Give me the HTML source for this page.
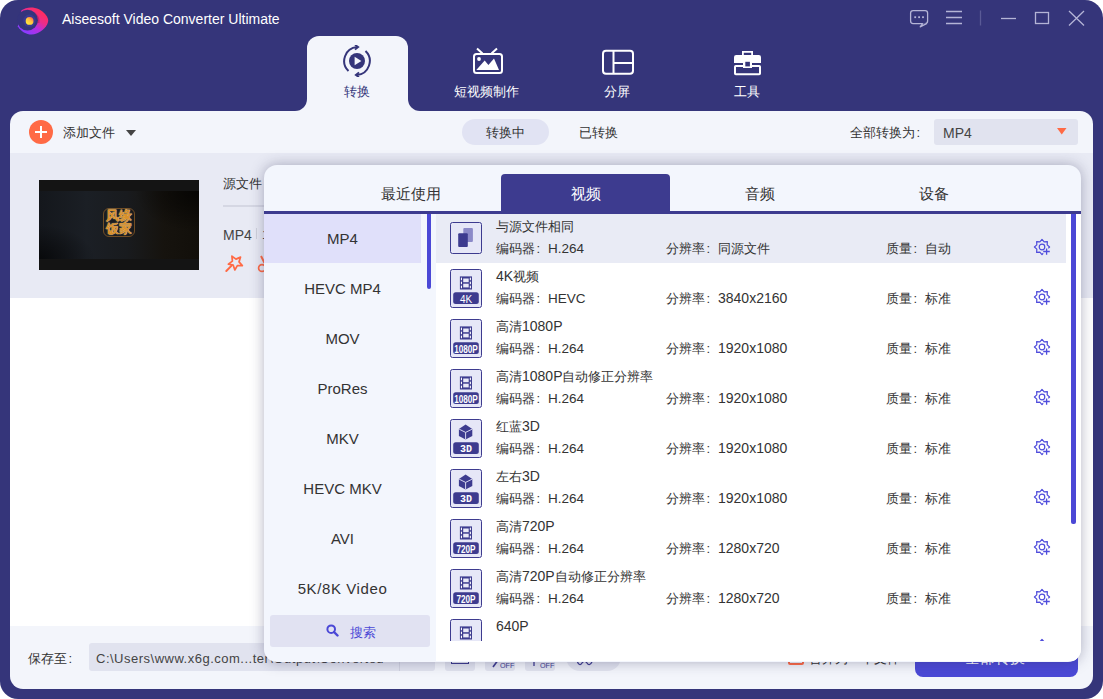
<!DOCTYPE html>
<html><head><meta charset="utf-8"><style>
*{margin:0;padding:0;box-sizing:border-box}
html,body{width:1103px;height:699px;overflow:hidden;background:#fff;font-family:"Liberation Sans",sans-serif;color:#333}
.abs{position:absolute}
#win{position:absolute;left:0;top:0;width:1103px;height:699px;background:#35357a;border-radius:18px;overflow:hidden}
.t{position:absolute;white-space:nowrap;line-height:1}
.c{display:inline-block;width:13px;padding-left:1.5px}
.ico{position:absolute;width:32px;border:1.2px solid #3d3b8f;border-radius:2.5px;background:#e6e7f7}
#panel{position:absolute;left:10px;top:111px;width:1083px;height:578px;background:#f3f5fb;border-radius:13px;overflow:hidden}
</style></head><body>
<div id="win">
<svg class="abs" style="left:0;top:0" width="60" height="45" viewBox="0 0 60 45">
<defs>
<linearGradient id="lg1" x1="0.15" y1="0.85" x2="0.75" y2="0.15">
<stop offset="0" stop-color="#8a3cff"/><stop offset="0.4" stop-color="#b62ee0"/><stop offset="0.7" stop-color="#ec2d8a"/><stop offset="1" stop-color="#ff2d62"/>
</linearGradient>
<linearGradient id="rg1" x1="0.2" y1="0.9" x2="0.8" y2="0.1"><stop offset="0" stop-color="#ffe83a"/><stop offset="0.6" stop-color="#ffc040"/><stop offset="1" stop-color="#ff6a48"/></linearGradient>
</defs>
<path d="M21.5 10.3 C26 7, 33 6.4, 39 9.3 C44.5 12.3, 48.2 17, 48.2 20.6 C48.2 25.5, 42.5 31.2, 36.5 33.6 C30 36, 22 33.5, 17.8 26.2 Z" fill="url(#lg1)"/>
<path d="M35 12.5 C38.5 15, 40 19, 39.5 23 L37 23 Z" fill="#b0205a" opacity="0.6"/>
<circle cx="27.5" cy="20.2" r="10.4" fill="#34347c"/>
<circle cx="29.4" cy="20.8" r="6.2" fill="#3a3a90"/>
<circle cx="29.6" cy="20.9" r="3.9" fill="url(#rg1)"/>
</svg>
<div class="t" style="left:62px;top:12px;font-size:14px;color:#fff">Aiseesoft Video Converter Ultimate</div>
<svg class="abs" style="left:905px;top:5px" width="185" height="26" viewBox="905 5 185 26" fill="none" stroke="#b4b4d6" stroke-width="1.3">
<rect x="910.6" y="10.6" width="17" height="13" rx="2.5"/>
<path d="M922.8 23.3 L920.2 26.8 L927 23.3" fill="#35357a" stroke-linejoin="round"/>
<rect x="914.3" y="16.3" width="1.8" height="1.8" fill="#b4b4d6" stroke="none"/>
<rect x="918.2" y="16.3" width="1.8" height="1.8" fill="#b4b4d6" stroke="none"/>
<rect x="922.1" y="16.3" width="1.8" height="1.8" fill="#b4b4d6" stroke="none"/>
<path d="M946 11.5H962M946 17.5H962M946 23.5H962"/>
<path d="M980.5 10.5V25.5" stroke="#5a5a96"/>
<path d="M1001 18.5H1016"/>
<rect x="1035.5" y="12.5" width="13" height="11"/>
<path d="M1069 11L1084 25.5M1084 11L1069 25.5"/>
</svg>
<div class="abs" style="left:307px;top:36px;width:101px;height:80px;background:#f3f5fb;border-radius:12px 12px 0 0"></div>
<div class="abs" style="left:295px;top:99px;width:12px;height:12px;background:#f3f5fb"></div>
<div class="abs" style="left:295px;top:99px;width:12px;height:12px;background:#35357a;border-radius:0 0 12px 0"></div>
<div class="abs" style="left:408px;top:99px;width:12px;height:12px;background:#f3f5fb"></div>
<div class="abs" style="left:408px;top:99px;width:12px;height:12px;background:#35357a;border-radius:0 0 0 12px"></div>
<svg class="abs" style="left:341px;top:45px" width="32" height="32" viewBox="0 0 32 32" fill="none" stroke="#35357a" stroke-width="2">
<path d="M7.5 26 A14 14 0 0 1 16 2"/>
<path d="M24.5 6 A14 14 0 0 1 16 30"/>
<path d="M14 -0.2 L17.2 2 L14 4.6" stroke-width="1.8"/>
<path d="M18 27.4 L14.8 30 L18 32.2" stroke-width="1.8"/>
<circle cx="16" cy="16" r="8" fill="#35357a" stroke="none"/>
<path d="M13.6 11.8 L20.4 16 L13.6 20.2Z" fill="#f3f5fb" stroke="none"/>
</svg>
<div class="t" style="left:344px;top:85px;font-size:13px;color:#35357a">转换</div>
<svg class="abs" style="left:470px;top:46px" width="34" height="30" viewBox="470 46 34 30" fill="none" stroke="#fff" stroke-width="2">
<rect x="474" y="54" width="28" height="19" rx="2.5"/>
<path d="M477 48.5 L482.5 53.5 M497 48.5 L491.5 53.5"/>
<path d="M476.3 70 L484.7 60.5 L488.4 65 L494 58.6 L499 70Z" fill="#fff" stroke="none"/>
<circle cx="479" cy="59" r="1.9" fill="#fff" stroke="none"/>
</svg>
<div class="t" style="left:454px;top:85px;font-size:13px;color:#fff">短视频制作</div>
<svg class="abs" style="left:600px;top:48px" width="36" height="28" viewBox="600 48 36 28" fill="none" stroke="#fff" stroke-width="2">
<rect x="603" y="50.8" width="30" height="23" rx="3"/>
<path d="M613.5 51V74 M613.5 63H633"/>
</svg>
<div class="t" style="left:604px;top:85px;font-size:13px;color:#fff">分屏</div>
<svg class="abs" style="left:730px;top:48px" width="36" height="30" viewBox="730 48 36 30">
<path d="M742.9 55.5 V51.9 H752.1 V55.5" fill="none" stroke="#fff" stroke-width="1.8"/>
<path d="M734 57.2 Q734 55 736.2 55 H758.8 Q761 55 761 57.2 V63 H734Z" fill="#fff"/>
<rect x="735" y="66" width="25" height="8.2" rx="0.8" fill="none" stroke="#fff" stroke-width="2"/>
<rect x="743" y="61" width="9" height="7" fill="#fff"/>
<rect x="745.3" y="61.8" width="4.6" height="4.6" fill="#35357a"/>
</svg>
<div class="t" style="left:734px;top:85px;font-size:13px;color:#fff">工具</div>
<div id="panel">
<div class="abs" style="left:19px;top:9px;width:24px;height:24px;border-radius:12px;background:#ff6a45"></div>
<div class="abs" style="left:25.2px;top:19.7px;width:11.6px;height:2.6px;background:#fff"></div>
<div class="abs" style="left:29.7px;top:15.2px;width:2.6px;height:11.6px;background:#fff"></div>
<div class="t" style="left:53px;top:15px;font-size:13px;color:#333">添加文件</div>
<svg class="abs" style="left:116px;top:19px" width="10" height="6"><path d="M0 0H10L5 6Z" fill="#444"/></svg>
<div class="abs" style="left:452px;top:8px;width:87px;height:26px;border-radius:13px;background:#e1e3f3"></div>
<div class="t" style="left:476px;top:15px;font-size:13px;color:#333">转换中</div>
<div class="t" style="left:569px;top:15px;font-size:13px;color:#333">已转换</div>
<div class="t" style="left:840px;top:15px;font-size:13px;color:#333">全部转换为<span class="c">:</span></div>
<div class="abs" style="left:924px;top:8px;width:144px;height:26px;border-radius:3px;background:#e1e3ef"></div>
<div class="t" style="left:933px;top:15px;font-size:14px;color:#444">MP4</div>
<svg class="abs" style="left:1047px;top:17px" width="10" height="7"><path d="M0 0H9.5L4.75 6.5Z" fill="#ff6a45"/></svg>
<div class="abs" style="left:0;top:42px;width:1083px;height:145px;background:#e8eaf4"></div>
<div class="abs" style="left:0;top:187px;width:1083px;height:328px;background:#fff"></div>
<div class="abs" style="left:29px;top:69px;width:160px;height:90px;background:#141414;overflow:hidden">
<div class="abs" style="left:0;top:11px;width:160px;height:68px;background:linear-gradient(90deg,#14171c 0%,#1b1f25 30%,#191b1e 55%,#16130e 78%,#120f0a 100%)"></div>
<div class="abs" style="left:0;top:11px;width:160px;height:68px;background:radial-gradient(ellipse 40% 60% at 100% 0%,rgba(0,0,0,.7) 0%,rgba(0,0,0,0) 100%),radial-gradient(ellipse 35% 50% at 0% 100%,rgba(0,0,0,.6) 0%,rgba(0,0,0,0) 100%)"></div>
<div class="abs" style="left:64px;top:28px;width:32px;height:29px;border:1px solid rgba(170,110,40,.6);border-radius:6px"></div>
<div class="abs" style="left:65px;top:29.5px;width:30px;height:26px;font-size:12.5px;font-weight:bold;line-height:13px;color:#d9902a;text-shadow:0 0 1px #fff2c0;white-space:normal;text-align:center">风缘<br>饭家</div>
</div>
<div class="t" style="left:213px;top:66px;font-size:13px;color:#333">源文件</div>
<div class="abs" style="left:213px;top:94px;width:60px;height:2px;background:#d5d7e3"></div>
<div class="t" style="left:213px;top:117px;font-size:14px;color:#444">MP4</div>
<div class="abs" style="left:245.5px;top:117px;width:1.2px;height:11px;background:#cfd1dc"></div>
<div class="t" style="left:252px;top:117px;font-size:13px;color:#444">1</div>
<svg class="abs" style="left:210px;top:139px" width="60" height="26" viewBox="220 250 60 26" fill="none" stroke="#ff6a45" stroke-width="1.7" stroke-linejoin="round">
<path d="M231.90 256.19 L235.97 259.12 L240.55 257.10 L239.02 261.87 L242.36 265.61 L237.35 265.63 L234.83 269.96 L233.26 265.20 L228.36 264.14 L232.40 261.18Z"/>
<path d="M231.6 265.6 L226.3 271" stroke-width="2" stroke-linecap="round"/>
<path d="M261 256 L264.5 263" stroke-width="2"/>
<circle cx="262" cy="268" r="3.4"/>
</svg>
<div class="t" style="left:18px;top:541px;font-size:13px;color:#333">保存至<span class="c">:</span></div>
<div class="abs" style="left:79px;top:532px;width:346px;height:28px;border-radius:3px;background:#e1e3ef"></div>
<div class="abs" style="left:389px;top:532px;width:1px;height:28px;background:#d0d2e0"></div>
<div class="t" style="left:86px;top:541px;font-size:13px;letter-spacing:0.5px;color:#444">C:\Users\www.x6g.com...ter\Output\Converted</div>
<div class="abs" style="left:435px;top:532px;width:30px;height:28px;border-radius:3px;background:#e1e3ef"></div>
<div class="abs" style="left:475px;top:532px;width:30px;height:28px;border-radius:3px;background:#e1e3ef"></div>
<div class="abs" style="left:515px;top:532px;width:30px;height:28px;border-radius:3px;background:#e1e3ef"></div>
<div class="abs" style="left:441px;top:544px;width:18px;height:9px;border:1.5px solid #3d3b8f;border-top:none"></div>
<div class="abs" style="left:556px;top:532px;width:55px;height:28px;border-radius:14px;background:#e1e3ef"></div>
<svg class="abs" style="left:430px;top:540px" width="180" height="20" viewBox="440 651 180 20" fill="none" stroke="#3d3b8f" stroke-width="1.3"><path d="M493 667 L498.5 659.5" stroke-width="1.6"/><path d="M534 658V666M537.5 658V662M532 660H540"/><path d="M577 661 Q579.5 667 582 663 Q584.5 659 587 663 Q589.5 667 592.5 661"/><text x="500" y="667.8" font-family="Liberation Sans" font-size="7.2" fill="#3d3b8f" stroke="none">OFF</text><text x="540" y="667.8" font-family="Liberation Sans" font-size="7.2" fill="#3d3b8f" stroke="none">OFF</text></svg>
<div class="abs" style="left:778px;top:538px;width:16px;height:16px;border:2px solid #ff6a45;border-radius:2px"></div>
<div class="t" style="left:799px;top:541px;font-size:13px;color:#333">合并为一个文件</div>
<div class="abs" style="left:905px;top:526px;width:163px;height:40px;border-radius:8px;background:#4b49d6"></div>
<div class="t" style="left:955px;top:539px;font-size:15px;color:#fff">全部转换</div>
</div>
<div id="dd" class="abs" style="left:264px;top:165px;width:817px;height:497px;background:#f3f6fd;border-radius:13px;box-shadow:0 0 14px rgba(40,40,80,.35);overflow:hidden">
<div class="abs" style="left:237px;top:9px;width:169px;height:40px;background:#3d3b8f;border-radius:4px 4px 0 0"></div>
<div class="t" style="left:117.0px;top:21.0px;font-size:15px;color:#333">最近使用</div>
<div class="t" style="left:306.5px;top:21.0px;font-size:15px;color:#fff">视频</div>
<div class="t" style="left:481.0px;top:21.0px;font-size:15px;color:#333">音频</div>
<div class="t" style="left:655.0px;top:21.0px;font-size:15px;color:#333">设备</div>
<div class="abs" style="left:0;top:46px;width:817px;height:2.6px;background:#3d3b8f"></div>
<div class="abs" style="left:0;top:48.5px;width:157px;height:49.5px;background:#e0e0fa"></div>
<div class="t" style="left:0;width:157px;text-align:center;top:65.5px;font-size:15px;color:#333;letter-spacing:0px">MP4</div>
<div class="t" style="left:0;width:157px;text-align:center;top:115.5px;font-size:15px;color:#333;letter-spacing:0px">HEVC MP4</div>
<div class="t" style="left:0;width:157px;text-align:center;top:165.5px;font-size:15px;color:#333;letter-spacing:0px">MOV</div>
<div class="t" style="left:0;width:157px;text-align:center;top:215.5px;font-size:15px;color:#333;letter-spacing:0px">ProRes</div>
<div class="t" style="left:0;width:157px;text-align:center;top:265.5px;font-size:15px;color:#333;letter-spacing:0px">MKV</div>
<div class="t" style="left:0;width:157px;text-align:center;top:315.5px;font-size:15px;color:#333;letter-spacing:0px">HEVC MKV</div>
<div class="t" style="left:0;width:157px;text-align:center;top:365.5px;font-size:15px;color:#333;letter-spacing:0px">AVI</div>
<div class="t" style="left:0;width:157px;text-align:center;top:415.5px;font-size:15px;color:#333;letter-spacing:0.6px">5K/8K Video</div>
<div class="abs" style="left:162.60000000000002px;top:48.5px;width:4.4px;height:75px;background:#4b48d6;border-radius:0 0 2.2px 2.2px"></div>
<div class="abs" style="left:6px;top:450px;width:160px;height:32px;border-radius:3px;background:#e1e2f2"></div>
<svg class="abs" style="left:62px;top:459px" width="13" height="13" viewBox="0 0 13 13"><circle cx="5.2" cy="5.2" r="3.8" fill="none" stroke="#4b48d6" stroke-width="2"/><path d="M8 8L11.5 11.5" stroke="#4b48d6" stroke-width="2.4" stroke-linecap="round"/></svg>
<div class="t" style="left:86px;top:460.5px;font-size:13px;color:#4b48d6">搜索</div>
<div class="abs" style="left:172px;top:48.5px;width:645px;height:447.5px;background:#fff"></div>
<div class="abs" style="left:172px;top:48.5px;width:645px;height:427.5px;overflow:hidden"><div class="abs" style="left:0;top:-0.5px;width:630px;height:50px;background:#e9ebf5"></div>
<div class="ico" style="left:14px;top:8.5px;height:32px"></div>
<svg class="abs" style="left:14px;top:8.5px" width="32" height="32"><rect x="13.3" y="6.1" width="9.6" height="13.8" rx="1" fill="#8c8ac8"/><rect x="8.2" y="11.2" width="9.6" height="13.8" rx="1" fill="#3d3b8f"/></svg>
<div class="t" style="left:60px;top:6.0px;font-size:13px;color:#333">与源文件相同</div>
<div class="t" style="left:60px;top:28.0px;font-size:13px;color:#333">编码器<span class="c">:</span><span style="font-size:13.5px;line-height:0">H.264</span></div>
<div class="t" style="left:230px;top:28.0px;font-size:13px;color:#333">分辨率<span class="c">:</span>同源文件</div>
<div class="t" style="left:450px;top:28.0px;font-size:13px;color:#333">质量<span class="c">:</span>自动</div>
<svg class="abs" style="left:597px;top:24.3px" width="18" height="18" viewBox="0 0 18 18"><path d="M10.18 15.27 L9.00 16.60 L6.86 14.17 L3.63 14.37 L3.83 11.14 L1.40 9.00 L3.83 6.86 L3.63 3.63 L6.86 3.83 L9.00 1.40 L11.14 3.83 L14.37 3.63 L14.17 6.86 L16.60 9.00 L15.27 10.18" fill="none" stroke="#4f4cdc" stroke-width="1.2" stroke-linejoin="round"/><circle cx="9" cy="9" r="2.8" fill="none" stroke="#4f4cdc" stroke-width="1.2"/><path d="M13.6 10.4V16.8M10.2 13.5H16.8" stroke="#4f4cdc" stroke-width="1.3"/></svg>
<div class="ico" style="left:14px;top:55.0px;height:39px"></div>
<svg class="abs" style="left:14px;top:55.0px" width="32" height="39" viewBox="0 0 32 39"><rect x="9.9" y="7.4" width="12.1" height="13.1" fill="#3d3b8f"/><rect x="10.9" y="8.5" width="1.1" height="2.7" rx="0.5" fill="#fff"/><rect x="19.8" y="8.5" width="1.1" height="2.7" rx="0.5" fill="#fff"/><rect x="10.9" y="12.5" width="1.1" height="2.7" rx="0.5" fill="#fff"/><rect x="19.8" y="12.5" width="1.1" height="2.7" rx="0.5" fill="#fff"/><rect x="10.9" y="16.5" width="1.1" height="2.7" rx="0.5" fill="#fff"/><rect x="19.8" y="16.5" width="1.1" height="2.7" rx="0.5" fill="#fff"/><rect x="13.2" y="9.5" width="5.5" height="3.7" fill="#e9e9f7"/><rect x="13.2" y="14.7" width="5.5" height="3.7" fill="#e9e9f7"/><rect x="3.2" y="23.3" width="25.6" height="11.7" rx="2.5" fill="#3d3b8f"/><text x="16" y="33.6" text-anchor="middle" font-family="Liberation Sans" font-size="10" fill="#fff">4K</text></svg>
<div class="t" style="left:60px;top:56.0px;font-size:13px;color:#333"><span style="font-size:14px;line-height:0">4K</span>视频</div>
<div class="t" style="left:60px;top:78.0px;font-size:13px;color:#333">编码器<span class="c">:</span><span style="font-size:13.5px;line-height:0">HEVC</span></div>
<div class="t" style="left:230px;top:78.0px;font-size:13px;color:#333">分辨率<span class="c">:</span><span style="font-size:14px;line-height:0">3840x2160</span></div>
<div class="t" style="left:450px;top:78.0px;font-size:13px;color:#333">质量<span class="c">:</span>标准</div>
<svg class="abs" style="left:597px;top:74.3px" width="18" height="18" viewBox="0 0 18 18"><path d="M10.18 15.27 L9.00 16.60 L6.86 14.17 L3.63 14.37 L3.83 11.14 L1.40 9.00 L3.83 6.86 L3.63 3.63 L6.86 3.83 L9.00 1.40 L11.14 3.83 L14.37 3.63 L14.17 6.86 L16.60 9.00 L15.27 10.18" fill="none" stroke="#4f4cdc" stroke-width="1.2" stroke-linejoin="round"/><circle cx="9" cy="9" r="2.8" fill="none" stroke="#4f4cdc" stroke-width="1.2"/><path d="M13.6 10.4V16.8M10.2 13.5H16.8" stroke="#4f4cdc" stroke-width="1.3"/></svg>
<div class="ico" style="left:14px;top:105.0px;height:39px"></div>
<svg class="abs" style="left:14px;top:105.0px" width="32" height="39" viewBox="0 0 32 39"><rect x="9.9" y="7.4" width="12.1" height="13.1" fill="#3d3b8f"/><rect x="10.9" y="8.5" width="1.1" height="2.7" rx="0.5" fill="#fff"/><rect x="19.8" y="8.5" width="1.1" height="2.7" rx="0.5" fill="#fff"/><rect x="10.9" y="12.5" width="1.1" height="2.7" rx="0.5" fill="#fff"/><rect x="19.8" y="12.5" width="1.1" height="2.7" rx="0.5" fill="#fff"/><rect x="10.9" y="16.5" width="1.1" height="2.7" rx="0.5" fill="#fff"/><rect x="19.8" y="16.5" width="1.1" height="2.7" rx="0.5" fill="#fff"/><rect x="13.2" y="9.5" width="5.5" height="3.7" fill="#e9e9f7"/><rect x="13.2" y="14.7" width="5.5" height="3.7" fill="#e9e9f7"/><rect x="3.2" y="23.3" width="25.6" height="11.7" rx="2.5" fill="#3d3b8f"/><text x="16" y="33.6" text-anchor="middle" font-family="Liberation Sans" font-weight="bold" font-size="10.5" fill="#fff" transform="translate(16 0) scale(0.78 1) translate(-16 0)">1080P</text></svg>
<div class="t" style="left:60px;top:106.0px;font-size:13px;color:#333">高清<span style="font-size:14px;line-height:0">1080P</span></div>
<div class="t" style="left:60px;top:128.0px;font-size:13px;color:#333">编码器<span class="c">:</span><span style="font-size:13.5px;line-height:0">H.264</span></div>
<div class="t" style="left:230px;top:128.0px;font-size:13px;color:#333">分辨率<span class="c">:</span><span style="font-size:14px;line-height:0">1920x1080</span></div>
<div class="t" style="left:450px;top:128.0px;font-size:13px;color:#333">质量<span class="c">:</span>标准</div>
<svg class="abs" style="left:597px;top:124.3px" width="18" height="18" viewBox="0 0 18 18"><path d="M10.18 15.27 L9.00 16.60 L6.86 14.17 L3.63 14.37 L3.83 11.14 L1.40 9.00 L3.83 6.86 L3.63 3.63 L6.86 3.83 L9.00 1.40 L11.14 3.83 L14.37 3.63 L14.17 6.86 L16.60 9.00 L15.27 10.18" fill="none" stroke="#4f4cdc" stroke-width="1.2" stroke-linejoin="round"/><circle cx="9" cy="9" r="2.8" fill="none" stroke="#4f4cdc" stroke-width="1.2"/><path d="M13.6 10.4V16.8M10.2 13.5H16.8" stroke="#4f4cdc" stroke-width="1.3"/></svg>
<div class="ico" style="left:14px;top:155.0px;height:39px"></div>
<svg class="abs" style="left:14px;top:155.0px" width="32" height="39" viewBox="0 0 32 39"><rect x="9.9" y="7.4" width="12.1" height="13.1" fill="#3d3b8f"/><rect x="10.9" y="8.5" width="1.1" height="2.7" rx="0.5" fill="#fff"/><rect x="19.8" y="8.5" width="1.1" height="2.7" rx="0.5" fill="#fff"/><rect x="10.9" y="12.5" width="1.1" height="2.7" rx="0.5" fill="#fff"/><rect x="19.8" y="12.5" width="1.1" height="2.7" rx="0.5" fill="#fff"/><rect x="10.9" y="16.5" width="1.1" height="2.7" rx="0.5" fill="#fff"/><rect x="19.8" y="16.5" width="1.1" height="2.7" rx="0.5" fill="#fff"/><rect x="13.2" y="9.5" width="5.5" height="3.7" fill="#e9e9f7"/><rect x="13.2" y="14.7" width="5.5" height="3.7" fill="#e9e9f7"/><rect x="3.2" y="23.3" width="25.6" height="11.7" rx="2.5" fill="#3d3b8f"/><text x="16" y="33.6" text-anchor="middle" font-family="Liberation Sans" font-weight="bold" font-size="10.5" fill="#fff" transform="translate(16 0) scale(0.78 1) translate(-16 0)">1080P</text></svg>
<div class="t" style="left:60px;top:156.0px;font-size:13px;color:#333">高清<span style="font-size:14px;line-height:0">1080P</span>自动修正分辨率</div>
<div class="t" style="left:60px;top:178.0px;font-size:13px;color:#333">编码器<span class="c">:</span><span style="font-size:13.5px;line-height:0">H.264</span></div>
<div class="t" style="left:230px;top:178.0px;font-size:13px;color:#333">分辨率<span class="c">:</span><span style="font-size:14px;line-height:0">1920x1080</span></div>
<div class="t" style="left:450px;top:178.0px;font-size:13px;color:#333">质量<span class="c">:</span>标准</div>
<svg class="abs" style="left:597px;top:174.3px" width="18" height="18" viewBox="0 0 18 18"><path d="M10.18 15.27 L9.00 16.60 L6.86 14.17 L3.63 14.37 L3.83 11.14 L1.40 9.00 L3.83 6.86 L3.63 3.63 L6.86 3.83 L9.00 1.40 L11.14 3.83 L14.37 3.63 L14.17 6.86 L16.60 9.00 L15.27 10.18" fill="none" stroke="#4f4cdc" stroke-width="1.2" stroke-linejoin="round"/><circle cx="9" cy="9" r="2.8" fill="none" stroke="#4f4cdc" stroke-width="1.2"/><path d="M13.6 10.4V16.8M10.2 13.5H16.8" stroke="#4f4cdc" stroke-width="1.3"/></svg>
<div class="ico" style="left:14px;top:205.0px;height:39px"></div>
<svg class="abs" style="left:14px;top:205.0px" width="32" height="39" viewBox="0 0 32 39"><path d="M15.6 5.4 L22.3 10 V17 L15.6 20.6 L8.9 17 V10Z" fill="#3d3b8f"/><path d="M9.2 10.2 L15.6 13.4 L22 10.2 M15.6 13.4 V20.4" stroke="#e6e7f7" stroke-width="0.9" fill="none"/><rect x="3.2" y="23.3" width="25.6" height="11.7" rx="2.5" fill="#3d3b8f"/><text x="16" y="33.4" text-anchor="middle" font-family="Liberation Mono" font-weight="bold" font-size="10" fill="#fff" transform="translate(16 0) scale(1 1) translate(-16 0)">3D</text></svg>
<div class="t" style="left:60px;top:206.0px;font-size:13px;color:#333">红蓝<span style="font-size:14px;line-height:0">3D</span></div>
<div class="t" style="left:60px;top:228.0px;font-size:13px;color:#333">编码器<span class="c">:</span><span style="font-size:13.5px;line-height:0">H.264</span></div>
<div class="t" style="left:230px;top:228.0px;font-size:13px;color:#333">分辨率<span class="c">:</span><span style="font-size:14px;line-height:0">1920x1080</span></div>
<div class="t" style="left:450px;top:228.0px;font-size:13px;color:#333">质量<span class="c">:</span>标准</div>
<svg class="abs" style="left:597px;top:224.3px" width="18" height="18" viewBox="0 0 18 18"><path d="M10.18 15.27 L9.00 16.60 L6.86 14.17 L3.63 14.37 L3.83 11.14 L1.40 9.00 L3.83 6.86 L3.63 3.63 L6.86 3.83 L9.00 1.40 L11.14 3.83 L14.37 3.63 L14.17 6.86 L16.60 9.00 L15.27 10.18" fill="none" stroke="#4f4cdc" stroke-width="1.2" stroke-linejoin="round"/><circle cx="9" cy="9" r="2.8" fill="none" stroke="#4f4cdc" stroke-width="1.2"/><path d="M13.6 10.4V16.8M10.2 13.5H16.8" stroke="#4f4cdc" stroke-width="1.3"/></svg>
<div class="ico" style="left:14px;top:255.0px;height:39px"></div>
<svg class="abs" style="left:14px;top:255.0px" width="32" height="39" viewBox="0 0 32 39"><path d="M15.6 5.4 L22.3 10 V17 L15.6 20.6 L8.9 17 V10Z" fill="#3d3b8f"/><path d="M9.2 10.2 L15.6 13.4 L22 10.2 M15.6 13.4 V20.4" stroke="#e6e7f7" stroke-width="0.9" fill="none"/><rect x="3.2" y="23.3" width="25.6" height="11.7" rx="2.5" fill="#3d3b8f"/><text x="16" y="33.4" text-anchor="middle" font-family="Liberation Mono" font-weight="bold" font-size="10" fill="#fff" transform="translate(16 0) scale(1 1) translate(-16 0)">3D</text></svg>
<div class="t" style="left:60px;top:256.0px;font-size:13px;color:#333">左右<span style="font-size:14px;line-height:0">3D</span></div>
<div class="t" style="left:60px;top:278.0px;font-size:13px;color:#333">编码器<span class="c">:</span><span style="font-size:13.5px;line-height:0">H.264</span></div>
<div class="t" style="left:230px;top:278.0px;font-size:13px;color:#333">分辨率<span class="c">:</span><span style="font-size:14px;line-height:0">1920x1080</span></div>
<div class="t" style="left:450px;top:278.0px;font-size:13px;color:#333">质量<span class="c">:</span>标准</div>
<svg class="abs" style="left:597px;top:274.3px" width="18" height="18" viewBox="0 0 18 18"><path d="M10.18 15.27 L9.00 16.60 L6.86 14.17 L3.63 14.37 L3.83 11.14 L1.40 9.00 L3.83 6.86 L3.63 3.63 L6.86 3.83 L9.00 1.40 L11.14 3.83 L14.37 3.63 L14.17 6.86 L16.60 9.00 L15.27 10.18" fill="none" stroke="#4f4cdc" stroke-width="1.2" stroke-linejoin="round"/><circle cx="9" cy="9" r="2.8" fill="none" stroke="#4f4cdc" stroke-width="1.2"/><path d="M13.6 10.4V16.8M10.2 13.5H16.8" stroke="#4f4cdc" stroke-width="1.3"/></svg>
<div class="ico" style="left:14px;top:305.0px;height:39px"></div>
<svg class="abs" style="left:14px;top:305.0px" width="32" height="39" viewBox="0 0 32 39"><rect x="9.9" y="7.4" width="12.1" height="13.1" fill="#3d3b8f"/><rect x="10.9" y="8.5" width="1.1" height="2.7" rx="0.5" fill="#fff"/><rect x="19.8" y="8.5" width="1.1" height="2.7" rx="0.5" fill="#fff"/><rect x="10.9" y="12.5" width="1.1" height="2.7" rx="0.5" fill="#fff"/><rect x="19.8" y="12.5" width="1.1" height="2.7" rx="0.5" fill="#fff"/><rect x="10.9" y="16.5" width="1.1" height="2.7" rx="0.5" fill="#fff"/><rect x="19.8" y="16.5" width="1.1" height="2.7" rx="0.5" fill="#fff"/><rect x="13.2" y="9.5" width="5.5" height="3.7" fill="#e9e9f7"/><rect x="13.2" y="14.7" width="5.5" height="3.7" fill="#e9e9f7"/><rect x="3.2" y="23.3" width="25.6" height="11.7" rx="2.5" fill="#3d3b8f"/><text x="16" y="33.6" text-anchor="middle" font-family="Liberation Sans" font-weight="bold" font-size="10.5" fill="#fff" transform="translate(16 0) scale(0.78 1) translate(-16 0)">720P</text></svg>
<div class="t" style="left:60px;top:306.0px;font-size:13px;color:#333">高清<span style="font-size:14px;line-height:0">720P</span></div>
<div class="t" style="left:60px;top:328.0px;font-size:13px;color:#333">编码器<span class="c">:</span><span style="font-size:13.5px;line-height:0">H.264</span></div>
<div class="t" style="left:230px;top:328.0px;font-size:13px;color:#333">分辨率<span class="c">:</span><span style="font-size:14px;line-height:0">1280x720</span></div>
<div class="t" style="left:450px;top:328.0px;font-size:13px;color:#333">质量<span class="c">:</span>标准</div>
<svg class="abs" style="left:597px;top:324.3px" width="18" height="18" viewBox="0 0 18 18"><path d="M10.18 15.27 L9.00 16.60 L6.86 14.17 L3.63 14.37 L3.83 11.14 L1.40 9.00 L3.83 6.86 L3.63 3.63 L6.86 3.83 L9.00 1.40 L11.14 3.83 L14.37 3.63 L14.17 6.86 L16.60 9.00 L15.27 10.18" fill="none" stroke="#4f4cdc" stroke-width="1.2" stroke-linejoin="round"/><circle cx="9" cy="9" r="2.8" fill="none" stroke="#4f4cdc" stroke-width="1.2"/><path d="M13.6 10.4V16.8M10.2 13.5H16.8" stroke="#4f4cdc" stroke-width="1.3"/></svg>
<div class="ico" style="left:14px;top:355.0px;height:39px"></div>
<svg class="abs" style="left:14px;top:355.0px" width="32" height="39" viewBox="0 0 32 39"><rect x="9.9" y="7.4" width="12.1" height="13.1" fill="#3d3b8f"/><rect x="10.9" y="8.5" width="1.1" height="2.7" rx="0.5" fill="#fff"/><rect x="19.8" y="8.5" width="1.1" height="2.7" rx="0.5" fill="#fff"/><rect x="10.9" y="12.5" width="1.1" height="2.7" rx="0.5" fill="#fff"/><rect x="19.8" y="12.5" width="1.1" height="2.7" rx="0.5" fill="#fff"/><rect x="10.9" y="16.5" width="1.1" height="2.7" rx="0.5" fill="#fff"/><rect x="19.8" y="16.5" width="1.1" height="2.7" rx="0.5" fill="#fff"/><rect x="13.2" y="9.5" width="5.5" height="3.7" fill="#e9e9f7"/><rect x="13.2" y="14.7" width="5.5" height="3.7" fill="#e9e9f7"/><rect x="3.2" y="23.3" width="25.6" height="11.7" rx="2.5" fill="#3d3b8f"/><text x="16" y="33.6" text-anchor="middle" font-family="Liberation Sans" font-weight="bold" font-size="10.5" fill="#fff" transform="translate(16 0) scale(0.78 1) translate(-16 0)">720P</text></svg>
<div class="t" style="left:60px;top:356.0px;font-size:13px;color:#333">高清<span style="font-size:14px;line-height:0">720P</span>自动修正分辨率</div>
<div class="t" style="left:60px;top:378.0px;font-size:13px;color:#333">编码器<span class="c">:</span><span style="font-size:13.5px;line-height:0">H.264</span></div>
<div class="t" style="left:230px;top:378.0px;font-size:13px;color:#333">分辨率<span class="c">:</span><span style="font-size:14px;line-height:0">1280x720</span></div>
<div class="t" style="left:450px;top:378.0px;font-size:13px;color:#333">质量<span class="c">:</span>标准</div>
<svg class="abs" style="left:597px;top:374.3px" width="18" height="18" viewBox="0 0 18 18"><path d="M10.18 15.27 L9.00 16.60 L6.86 14.17 L3.63 14.37 L3.83 11.14 L1.40 9.00 L3.83 6.86 L3.63 3.63 L6.86 3.83 L9.00 1.40 L11.14 3.83 L14.37 3.63 L14.17 6.86 L16.60 9.00 L15.27 10.18" fill="none" stroke="#4f4cdc" stroke-width="1.2" stroke-linejoin="round"/><circle cx="9" cy="9" r="2.8" fill="none" stroke="#4f4cdc" stroke-width="1.2"/><path d="M13.6 10.4V16.8M10.2 13.5H16.8" stroke="#4f4cdc" stroke-width="1.3"/></svg>
<div class="ico" style="left:14px;top:405.0px;height:39px"></div>
<svg class="abs" style="left:14px;top:405.0px" width="32" height="39" viewBox="0 0 32 39"><rect x="9.9" y="7.4" width="12.1" height="13.1" fill="#3d3b8f"/><rect x="10.9" y="8.5" width="1.1" height="2.7" rx="0.5" fill="#fff"/><rect x="19.8" y="8.5" width="1.1" height="2.7" rx="0.5" fill="#fff"/><rect x="10.9" y="12.5" width="1.1" height="2.7" rx="0.5" fill="#fff"/><rect x="19.8" y="12.5" width="1.1" height="2.7" rx="0.5" fill="#fff"/><rect x="10.9" y="16.5" width="1.1" height="2.7" rx="0.5" fill="#fff"/><rect x="19.8" y="16.5" width="1.1" height="2.7" rx="0.5" fill="#fff"/><rect x="13.2" y="9.5" width="5.5" height="3.7" fill="#e9e9f7"/><rect x="13.2" y="14.7" width="5.5" height="3.7" fill="#e9e9f7"/><rect x="3.2" y="23.3" width="25.6" height="11.7" rx="2.5" fill="#3d3b8f"/><text x="16" y="33.6" text-anchor="middle" font-family="Liberation Sans" font-weight="bold" font-size="10.5" fill="#fff" transform="translate(16 0) scale(0.78 1) translate(-16 0)">640P</text></svg>
<div class="t" style="left:60px;top:406.0px;font-size:13px;color:#333"><span style="font-size:14px;line-height:0">640P</span></div>
<div class="t" style="left:60px;top:428.0px;font-size:13px;color:#333">编码器<span class="c">:</span><span style="font-size:13.5px;line-height:0">H.264</span></div>
<div class="t" style="left:230px;top:428.0px;font-size:13px;color:#333">分辨率<span class="c">:</span><span style="font-size:14px;line-height:0">960x640</span></div>
<div class="t" style="left:450px;top:428.0px;font-size:13px;color:#333">质量<span class="c">:</span>标准</div>
<svg class="abs" style="left:597px;top:424.3px" width="18" height="18" viewBox="0 0 18 18"><path d="M10.18 15.27 L9.00 16.60 L6.86 14.17 L3.63 14.37 L3.83 11.14 L1.40 9.00 L3.83 6.86 L3.63 3.63 L6.86 3.83 L9.00 1.40 L11.14 3.83 L14.37 3.63 L14.17 6.86 L16.60 9.00 L15.27 10.18" fill="none" stroke="#4f4cdc" stroke-width="1.2" stroke-linejoin="round"/><circle cx="9" cy="9" r="2.8" fill="none" stroke="#4f4cdc" stroke-width="1.2"/><path d="M13.6 10.4V16.8M10.2 13.5H16.8" stroke="#4f4cdc" stroke-width="1.3"/></svg></div>
<div class="abs" style="left:807.4000000000001px;top:48.5px;width:4.4px;height:310.5px;background:#4b48d6;border-radius:0 0 2px 2px"></div>
</div>
</div>
</body></html>
